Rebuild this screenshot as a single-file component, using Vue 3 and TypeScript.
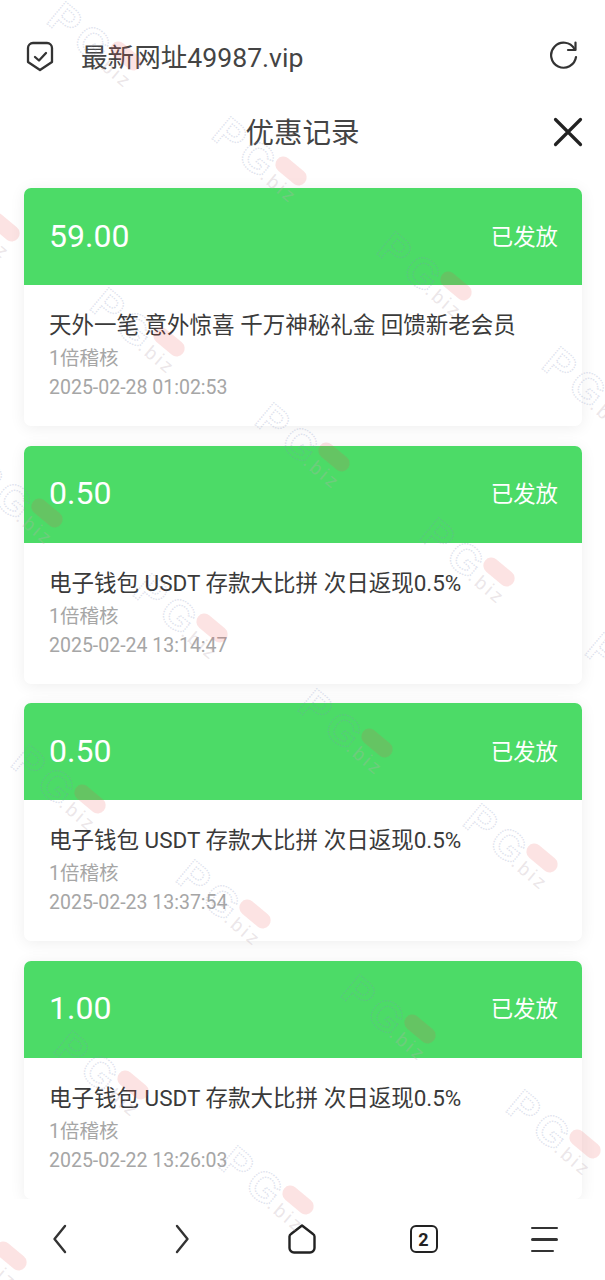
<script setup lang="ts">
interface Record {
  amount: string
  title: string
  time: string
}

const records: Record[] = [
  { amount: '59.00', title: '天外一笔 意外惊喜 千万神秘礼金 回馈新老会员', time: '2025-02-28 01:02:53' },
  { amount: '0.50', title: '电子钱包 USDT 存款大比拼 次日返现0.5%', time: '2025-02-24 13:14:47' },
  { amount: '0.50', title: '电子钱包 USDT 存款大比拼 次日返现0.5%', time: '2025-02-23 13:37:54' },
  { amount: '1.00', title: '电子钱包 USDT 存款大比拼 次日返现0.5%', time: '2025-02-22 13:26:03' },
]

// 水印按截图里的网格铺
const marks: { x: number; y: number }[] = [
  [126, 56], [291, 171], [456, 286], [621, 401], [4, 227], [169, 342], [334, 457], [499, 572],
  [47, 513], [212, 628], [377, 743], [542, 858], [90, 799], [255, 914], [420, 1029], [585, 1144],
  [133, 1085], [298, 1200], [11, 1256], [664, 687],
].map(([x, y]) => ({ x, y }))
</script>

<template>
  <div class="page">
    <div class="addr">
      <svg class="shield" width="30" height="34" viewBox="0 0 30 34" fill="none" stroke="#333" stroke-width="2.300" stroke-linejoin="round" stroke-linecap="round">
        <path d="M7 5h14a5 5 0 0 1 5 5V24L14 32 2 24V10a5 5 0 0 1 5-5z" />
        <path d="M9 19l4 3.500 7-7.500" />
      </svg>
      <span class="url">最新网址49987.vip</span>
      <svg class="reload" width="30" height="30" viewBox="0 0 30 30" fill="none" stroke="#333" stroke-width="2.200" stroke-linecap="round" stroke-linejoin="round">
        <path d="M25.500 9A12.500 12.500 0 1 0 27 17" />
        <path d="M26.500 2.500V10h-7.500" />
      </svg>
    </div>

    <div class="head">
      <span class="head-title">优惠记录</span>
      <svg class="close" width="30" height="30" viewBox="0 0 30 30" fill="none" stroke="#222" stroke-width="3.200" stroke-linecap="round">
        <path d="M2.500 2.500l25 25M27.500 2.500l-25 25" />
      </svg>
    </div>

    <div class="list">
      <div v-for="(r, i) in records" :key="i" class="card">
        <div class="card-top">
          <span class="amount">{{ r.amount }}</span>
          <span class="status">已发放</span>
        </div>
        <div class="card-body">
          <div class="title">{{ r.title }}</div>
          <div class="sub">1倍稽核</div>
          <div class="time">{{ r.time }}</div>
        </div>
      </div>
    </div>

    <div class="tabbar">
      <svg class="prev" width="24" height="32" viewBox="0 0 24 32" fill="none" stroke="#333" stroke-width="2.400" stroke-linecap="round" stroke-linejoin="round">
        <path d="M17 3L6.500 16 17 29" />
      </svg>
      <svg width="24" height="32" viewBox="0 0 24 32" fill="none" stroke="#333" stroke-width="2.400" stroke-linecap="round" stroke-linejoin="round">
        <path d="M7 3l10.500 13L7 29" />
      </svg>
      <svg class="home" width="30" height="32" viewBox="0 0 30 32" fill="none" stroke="#222" stroke-width="2.400" stroke-linejoin="round">
        <path d="M15 2.500L26 11a3 3 0 0 1 1.500 2.500V25a4.500 4.500 0 0 1-4.500 4.500H7A4.500 4.500 0 0 1 2.500 25V13.500A3 3 0 0 1 4 11z" />
      </svg>
      <div class="tabs">2</div>
      <div class="menu"><i></i><i></i><i class="short"></i></div>
    </div>

    <div class="marks">
      <svg v-for="(m, i) in marks" :key="i" class="mark" width="1" height="1" :style="{ left: m.x + 'px', top: m.y + 'px' }">
        <g transform="rotate(40)">
          <rect x="-18" y="-8" width="36" height="16" rx="8" class="pill" />
          <text x="-84" y="26" class="pg">P</text>
          <text x="-50" y="26" class="pg">G</text>
          <text x="-20" y="26" class="biz">.biz</text>
        </g>
      </svg>
    </div>
  </div>
</template>

<style scoped>
.page {
  position: relative;
  width: 605px;
  height: 1280px;
  overflow: hidden;
  background: #fff;
  display: flex;
  flex-direction: column;
  font-family: Roboto, "Noto Sans CJK SC", sans-serif;
  color: #333;
}
.addr {
  height: 52px;
  margin-top: 29px;
  padding: 0 26px;
  display: flex;
  align-items: center;
  flex: 0 0 auto;
}
.url {
  margin-left: 25px;
  font-size: 26.600px;
  color: #444;
  flex: 1;
}
.head {
  position: relative;
  height: 60px;
  margin-top: 20px;
  box-sizing: border-box;
  padding-bottom: 2px;
  display: flex;
  align-items: center;
  justify-content: center;
  flex: 0 0 auto;
}
.head-title {
  font-size: 28.500px;
  color: #444;
}
.close {
  position: absolute;
  right: 22px;
  top: 16px;
}
.list {
  margin-top: 27px;
  padding: 0 23px 0 24px;
  display: flex;
  flex-direction: column;
  gap: 19.500px;
  flex: 0 0 auto;
}
.card {
  height: 238px;
  background: #fff;
  border-radius: 7px;
  box-shadow: 0 2px 16px rgba(0, 0, 0, 0.07);
  overflow: hidden;
}
.card-top {
  height: 97px;
  box-sizing: border-box;
  padding: 0 24px 2px 25px;
  background: #4cdb67;
  color: #fff;
  display: flex;
  align-items: center;
  justify-content: space-between;
}
.amount { font-size: 32px; }
.status { font-size: 22.400px; margin-bottom: 2px; }
.card-body { padding: 23px 25px 0; }
.title {
  font-size: 22.500px;
  line-height: 34px;
  color: #3a3a3a;
  white-space: nowrap;
}
.sub {
  margin-top: 2px;
  font-size: 19.500px;
  line-height: 30px;
  color: #a6a6a6;
}
.time {
  font-size: 19.500px;
  line-height: 28px;
  color: #a6a6a6;
}
.tabbar {
  flex: 1;
  display: grid;
  grid-template-columns: repeat(5, 1fr);
  justify-items: center;
  align-items: center;
  background: #fff;
}
.prev { margin-right: 2px; }
.home { margin-right: 2px; }
.tabs {
  width: 28px;
  height: 28px;
  box-sizing: border-box;
  border: 2.500px solid #222;
  border-radius: 6px;
  font-size: 18px;
  font-weight: 700;
  color: #222;
  display: flex;
  align-items: center;
  justify-content: center;
}
.menu {
  width: 27px;
  display: flex;
  flex-direction: column;
  gap: 9px;
}
.menu i {
  display: block;
  height: 2.500px;
  background: #333;
  border-radius: 2px;
}
.menu i.short { width: 23px; }
.marks {
  position: absolute;
  inset: 0;
  pointer-events: none;
}
.mark {
  position: absolute;
  overflow: visible;
}
.pill {
  fill: rgba(235, 80, 80, 0.16);
}
.pg {
  font: 700 42px "Liberation Sans", sans-serif;
  fill: none;
  stroke: rgba(130, 145, 190, 0.26);
  stroke-width: 1.500;
  stroke-dasharray: 1.500 1.200;
}
.biz {
  font: 400 19px "Liberation Sans", sans-serif;
  letter-spacing: 3px;
  fill: rgba(190, 170, 180, 0.3);
}
</style>
